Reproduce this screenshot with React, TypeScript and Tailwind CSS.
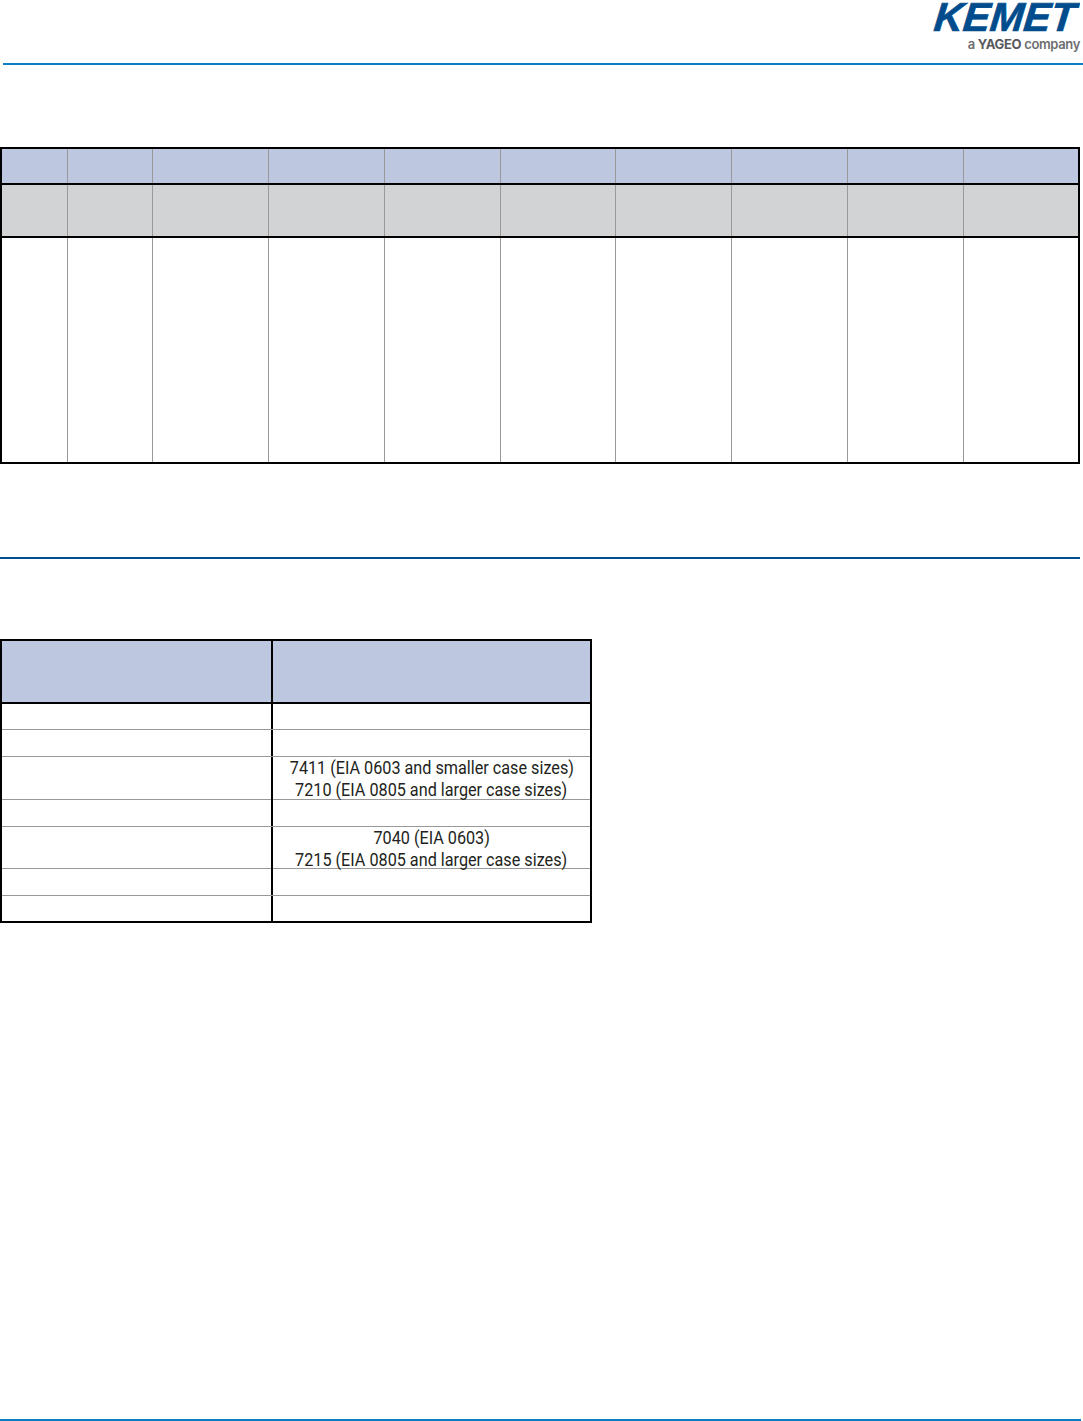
const cols1 = Array.from({ length: 10 });
const rows2: [number, string[]][] = [
  [26, []],
  [27, []],
  [43, ["7411 (EIA 0603 and smaller case sizes)", "7210 (EIA 0805 and larger case sizes)"]],
  [27, []],
  [42, ["7040 (EIA 0603)", "7215 (EIA 0805 and larger case sizes)"]],
  [27, []],
  [25, []],
];

function Row1({ cls }: { cls: string }) {
  return (
    <div className={`grid grid-cols-[66px_85px_116px_116px_116px_115px_116px_116px_116px_1fr] ${cls}`}>
      {cols1.map((_, i) => (
        <div key={i} className={i < 9 ? "border-r border-[#999999]" : ""} />
      ))}
    </div>
  );
}

export default function App() {
  return (
    <div className="w-[1083px] h-[1421px] bg-white flex flex-col font-['Roboto',sans-serif] overflow-hidden">
      <header className="h-[63px] flex flex-col items-end pr-[3px] shrink-0">
        <svg width="150" height="34" viewBox="0 0 150 34" className="shrink-0">
          <g transform="translate(3 30.5) skewX(-6)">
            <text
              x="0"
              y="0"
              fontFamily="'Liberation Sans', sans-serif"
              fontWeight="700"
              fontStyle="italic"
              fontSize="40.5"
              fill="#004c8c"
              stroke="#004c8c"
              strokeWidth="0.7"
              textLength="141"
              lengthAdjust="spacingAndGlyphs"
            >
              KEMET
            </text>
          </g>
        </svg>
        <div className="mt-[2px] text-[13px] leading-[16px] font-semibold font-['Inter',sans-serif] text-[#6d6e71] tracking-[-0.35px] whitespace-nowrap">
          a <span className="font-bold text-[#58595b]">YAGEO</span> company
        </div>
      </header>
      <div className="h-[2px] ml-[3px] bg-[#0a7cc1] shrink-0" />

      <section className="mt-[82px] w-[1080px] border-2 border-black shrink-0">
        <Row1 cls="h-[34px] bg-[#bec7e0] border-b-2 border-black box-content" />
        <Row1 cls="h-[51px] bg-[#d1d3d4] border-b-2 border-black box-content" />
        <Row1 cls="h-[224px] bg-white" />
      </section>

      <div className="mt-[93px] h-[2px] w-[1080px] bg-[#004f92] shrink-0" />

      <section className="mt-[80px] w-[592px] border-2 border-black shrink-0">
        <div className="grid grid-cols-[269px_2px_1fr] h-[61px] bg-[#bec7e0] border-b-2 border-black box-content">
          <div />
          <div className="bg-black" />
          <div />
        </div>
        {rows2.map(([h, lines], i) => (
          <div
            key={i}
            className={`grid grid-cols-[269px_2px_1fr] ${i < rows2.length - 1 ? "border-b border-[#999999]" : ""}`}
            style={{ height: h }}
          >
            <div />
            <div className="bg-black" />
            <div className="flex flex-col items-center justify-center pb-[5px] text-[18px] leading-[21.5px] text-[#231f20]">
              {lines.map((l) => (
                <span key={l} className="whitespace-nowrap scale-x-[0.9]">{l}</span>
              ))}
            </div>
          </div>
        ))}
      </section>

      <div className="mt-auto h-[2px] bg-[#0a7cc1] w-[1081px] shrink-0" />
    </div>
  );
}
